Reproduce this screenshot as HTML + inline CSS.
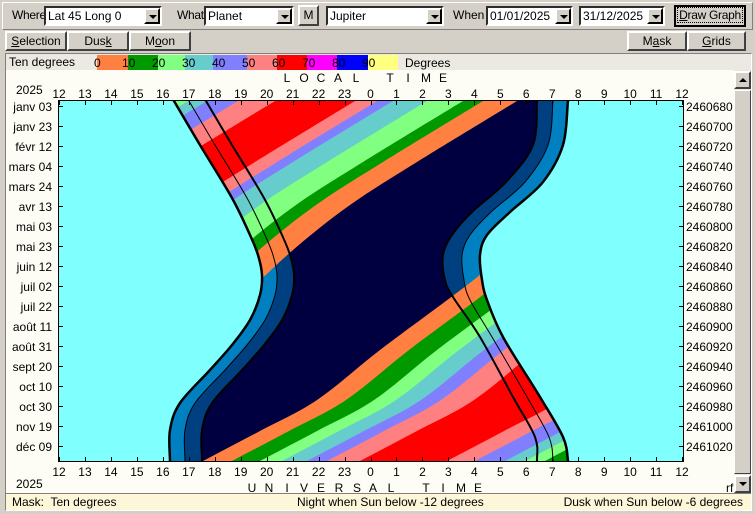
<!DOCTYPE html>
<html><head><meta charset="utf-8"><style>
*{margin:0;padding:0;box-sizing:border-box}
body{width:755px;height:514px;overflow:hidden;background:#d4d0c8;font-family:"Liberation Sans",sans-serif;font-size:11px;color:#000;position:relative}
.a{position:absolute;white-space:nowrap}
.cb{position:absolute;height:20px;background:#fff;border:2px inset #c0c0c0;border-color:#808080 #fff #fff #808080;padding:1px 2px;line-height:14px;font-size:12px}
.cb .ar{position:absolute;right:0;top:0;width:16px;height:16px;background:#d4d0c8;border:2px outset #fff;border-color:#fff #404040 #404040 #fff}
.cb .ar:after{content:"";position:absolute;left:3px;top:5px;border-left:4px solid transparent;border-right:4px solid transparent;border-top:4px solid #000}
.bt{position:absolute;height:20px;background:#d4d0c8;border:2px solid;border-color:#fff #404040 #404040 #fff;text-align:center;line-height:16px;white-space:nowrap;font-size:12px}
.ec{font-family:"Liberation Sans",sans-serif;font-size:12px}
</style></head><body>
<div style="position:absolute;left:2px;top:2px;width:751px;height:28px;border:1px solid #fff;border-right-color:#808080;border-bottom-color:#808080"></div>
<div class="a" style="left:12px;top:8px;font-size:12px;letter-spacing:-0.3px">Where</div>
<div class="cb" style="left:44px;top:6px;width:118px">Lat 45 Long 0<div class="ar"></div></div>
<div class="a" style="left:177px;top:8px;font-size:12px;letter-spacing:-0.3px">What</div>
<div class="cb" style="left:204px;top:6px;width:90px">Planet<div class="ar"></div></div>
<div class="bt" style="left:298px;top:5px;width:21px;height:21px;line-height:17px">M</div>
<div class="cb" style="left:326px;top:6px;width:118px">Jupiter<div class="ar"></div></div>
<div class="a" style="left:453px;top:8px;font-size:12px">When</div>
<div class="cb" style="left:486px;top:6px;width:87px">01/01/2025<div class="ar"></div></div>
<div class="cb" style="left:579px;top:6px;width:86px">31/12/2025<div class="ar"></div></div>
<div class="bt" style="left:674px;top:5px;width:72px;height:22px;border-color:#000;line-height:16px;letter-spacing:-0.3px"><span style="border:1px dotted #000;padding:0 1px"><u>D</u>raw Graph</span></div>
<div class="bt" style="left:5px;top:31px;width:62px"><u>S</u>election</div>
<div class="bt" style="left:67px;top:31px;width:62px">Dus<u>k</u></div>
<div class="bt" style="left:129px;top:31px;width:62px">M<u>o</u>on</div>
<div class="bt" style="left:627px;top:31px;width:60px">M<u>a</u>sk</div>
<div class="bt" style="left:687px;top:31px;width:59px"><u>G</u>rids</div>
<div style="position:absolute;left:5px;top:53px;width:747px;height:458px;border:1px solid #808080;border-right-color:#fff;border-bottom-color:#fff;background:#fefdf5"></div>
<div style="position:absolute;left:6px;top:54px;width:745px;height:16px;background:#ebe9e1"></div>
<div class="a" style="left:9px;top:55px;font-size:12px">Ten degrees</div>
<svg class="a" style="left:0;top:0" width="755" height="514" id="sv">
<g>
<rect x="97" y="55" width="31" height="15" fill="#ff8040"/>
<rect x="128" y="55" width="30" height="15" fill="#009900"/>
<rect x="158" y="55" width="27" height="15" fill="#80ff80"/>
<rect x="185" y="55" width="28" height="15" fill="#66cccc"/>
<rect x="213" y="55" width="34" height="15" fill="#8080ff"/>
<rect x="247" y="55" width="30" height="15" fill="#ff8080"/>
<rect x="277" y="55" width="30" height="15" fill="#ff0000"/>
<rect x="307" y="55" width="30" height="15" fill="#ff00ff"/>
<rect x="337" y="55" width="31" height="15" fill="#0000ff"/>
<rect x="368" y="55" width="30" height="15" fill="#ffff80"/>
<g class="ec" font-size="12">
<text x="94" y="67">0</text><text x="122" y="67">10</text><text x="152" y="67">20</text><text x="182" y="67">30</text><text x="212" y="67">40</text><text x="242" y="67">50</text><text x="272" y="67">60</text><text x="302" y="67">70</text><text x="332" y="67">80</text><text x="362" y="67">90</text>
<text x="405" y="67">Degrees</text>
</g>
</g>
<defs>
<clipPath id="plot"><rect x="59" y="101" width="624" height="360"/></clipPath>
<clipPath id="env"><path id="envp"/></clipPath>
<clipPath id="up"><rect x="0" y="80" width="755" height="290"/></clipPath>
<clipPath id="lo"><rect x="0" y="272" width="755" height="220"/></clipPath>
</defs>
<rect x="59" y="101" width="624" height="360" fill="#80ffff"/>
<g clip-path="url(#plot)">
<g clip-path="url(#env)">
<rect x="0" y="90" width="755" height="400" fill="#0080c0"/>
<path id="e2" fill="#004080"/>
<path id="e3" fill="#000040"/>
<g clip-path="url(#up)" id="ub"></g>
<g clip-path="url(#lo)" id="lb"></g>
</g>
<g fill="none" stroke="#000" stroke-linejoin="round" id="lines"></g>
</g>
<rect x="58.5" y="100.5" width="625" height="361" fill="none" stroke="#000" stroke-width="1"/>
<g stroke="#000" stroke-width="1">
<path d="M59,106.5h4M59,126.5h4M59,146.5h4M59,166.5h4M59,186.5h4M59,206.5h4M59,226.5h4M59,246.5h4M59,266.5h4M59,286.5h4M59,306.5h4M59,326.5h4M59,346.5h4M59,366.5h4M59,386.5h4M59,406.5h4M59,426.5h4M59,446.5h4"/>
<path d="M679,106.5h4M679,126.5h4M679,146.5h4M679,166.5h4M679,186.5h4M679,206.5h4M679,226.5h4M679,246.5h4M679,266.5h4M679,286.5h4M679,306.5h4M679,326.5h4M679,346.5h4M679,366.5h4M679,386.5h4M679,406.5h4M679,426.5h4M679,446.5h4"/>
</g>
<g id="tk" stroke="#000"></g>
<g class="ec" font-size="12" text-anchor="middle">
<g id="htop"></g><g id="hbot"></g>
</g>
<g class="ec" font-size="12" text-anchor="end">
<text x="52" y="111">janv 03</text><text x="52" y="131">janv 23</text><text x="52" y="151">févr 12</text><text x="52" y="171">mars 04</text><text x="52" y="191">mars 24</text><text x="52" y="211">avr 13</text><text x="52" y="231">mai 03</text><text x="52" y="251">mai 23</text><text x="52" y="271">juin 12</text><text x="52" y="291">juil 02</text><text x="52" y="311">juil 22</text><text x="52" y="331">août 11</text><text x="52" y="351">août 31</text><text x="52" y="371">sept 20</text><text x="52" y="391">oct 10</text><text x="52" y="411">oct 30</text><text x="52" y="431">nov 19</text><text x="52" y="451">déc 09</text>
</g>
<g class="ec" font-size="12">
<text x="686" y="111">2460680</text><text x="686" y="131">2460700</text><text x="686" y="151">2460720</text><text x="686" y="171">2460740</text><text x="686" y="191">2460760</text><text x="686" y="211">2460780</text><text x="686" y="231">2460800</text><text x="686" y="251">2460820</text><text x="686" y="271">2460840</text><text x="686" y="291">2460860</text><text x="686" y="311">2460880</text><text x="686" y="331">2460900</text><text x="686" y="351">2460920</text><text x="686" y="371">2460940</text><text x="686" y="391">2460960</text><text x="686" y="411">2460980</text><text x="686" y="431">2461000</text><text x="686" y="451">2461020</text>
<text x="16" y="94">2025</text><text x="16" y="488">2025</text>
<text x="726" y="492">rf</text>
</g>
<g class="ec" font-size="12" text-anchor="middle">
<text x="287" y="82">L</text><text x="304" y="82">O</text><text x="321" y="82">C</text><text x="338" y="82">A</text><text x="356" y="82">L</text><text x="390" y="82">T</text><text x="408" y="82">I</text><text x="426" y="82">M</text><text x="443" y="82">E</text>
<text x="252" y="492">U</text><text x="269" y="492">N</text><text x="287" y="492">I</text><text x="304" y="492">V</text><text x="321" y="492">E</text><text x="339" y="492">R</text><text x="357" y="492">S</text><text x="373" y="492">A</text><text x="391" y="492">L</text><text x="426" y="492">T</text><text x="443" y="492">I</text><text x="461" y="492">M</text><text x="478" y="492">E</text>
</g>
</svg>
<div style="position:absolute;left:734px;top:70px;width:17px;height:424px;background:#e8e6de"></div>
<div style="position:absolute;left:734px;top:90px;width:17px;height:384px;border:1px solid;border-color:#fff #404040 #404040 #fff;background:#d4d0c8"></div>
<div class="bt" style="left:734px;top:71px;width:17px;height:18px"><div style="position:absolute;left:3px;top:5px;border-left:4px solid transparent;border-right:4px solid transparent;border-bottom:4px solid #000"></div></div>
<div class="bt" style="left:734px;top:475px;width:17px;height:18px"><div style="position:absolute;left:3px;top:5px;border-left:4px solid transparent;border-right:4px solid transparent;border-top:4px solid #000"></div></div>
<div style="position:absolute;left:6px;top:493px;width:745px;height:17px;background:#fdf6d8;border-top:1px solid #808080"></div>
<div class="a" style="left:12px;top:495px;font-size:12px">Mask:&nbsp; Ten degrees</div>
<div class="a" style="left:297px;top:495px;font-size:12px">Night when Sun below -12 degrees</div>
<div class="a" style="right:12px;top:495px;font-size:12px">Dusk when Sun below -6 degrees</div>
<script>
var NS='http://www.w3.org/2000/svg';
function cr(p){var d='';for(var i=0;i<p.length-1;i++){var p0=p[i-1]||p[i],p1=p[i],p2=p[i+1],p3=p[i+2]||p2;
var c1=[p1[0]+(p2[0]-p0[0])/6,p1[1]+(p2[1]-p0[1])/6],c2=[p2[0]-(p3[0]-p1[0])/6,p2[1]-(p3[1]-p1[1])/6];
d+=' C'+c1[0].toFixed(1)+','+c1[1].toFixed(1)+' '+c2[0].toFixed(1)+','+c2[1].toFixed(1)+' '+p2[0]+','+p2[1];}return d;}
function sh(p,dx){return p.map(function(q){return [q[0]+dx,q[1]];});}
var L1=[[168,90],[174,101],[200,145],[232,198],[250,235],[258,255],[262,275],[260,295],[250,320],[232,345],[210,370],[180,403],[170,430],[170,461],[170,475]];
var R1=[[570,90],[568,101],[563,145],[543,182],[510,212],[487,235],[480,255],[482,280],[487,300],[503,337],[540,397],[563,437],[568,461],[569,475]];
var R3=[[538,90],[537,101],[533,145],[506,182],[472,212],[452,235],[443,255],[445,280],[453,297],[480,337],[513,397],[535,437],[537,461],[537,475]];
var R2=R1.map(function(q,i){return [Math.round((q[0]+R3[i][0])/2),q[1]];});
var L2=sh(L1,15),L3=sh(L1,32);
function env(L,R){var r=R.slice().reverse();return 'M'+L[0][0]+','+L[0][1]+cr(L)+' L'+r[0][0]+','+r[0][1]+cr(r)+'Z';}
document.getElementById('envp').setAttribute('d',env(L1,R1));
document.getElementById('e2').setAttribute('d',env(L2,R2));
document.getElementById('e3').setAttribute('d',env(L3,R3));
var ln='';
[[L1,2.5],[L2,1],[L3,2],[R1,2.5],[R2,1],[R3,2]].forEach(function(a){ln+='<path stroke-width="'+a[1]+'" d="M'+a[0][0][0]+','+a[0][0][1]+cr(a[0])+'"/>';});
document.getElementById('lines').innerHTML=ln;
var UB=[[552,80],[517,101],[417,162],[350,205],[293,250],[240,300],[190,350],[140,400]];
var ub='M'+UB[0][0]+','+UB[0][1]+cr(UB)+' L-900,400 L-900,80Z';
var uo=[[0,'#ff8040'],[-34,'#009900'],[-54,'#80ff80'],[-90,'#66cccc'],[-124,'#8080ff'],[-140,'#ff8080'],[-162,'#ff0000'],[-242,'#ff8080'],[-279,'#8080ff'],[-310,'#66cccc'],[-329,'#80ff80'],[-344,'#009900']];
var s='';uo.forEach(function(o){s+='<path transform="translate('+o[0]+',0)" d="'+ub+'" fill="'+o[1]+'"/>';});
document.getElementById('ub').innerHTML=s;
var LB=[[149,490],[203,461],[260,431],[317,400],[380,350],[450,298],[486,270],[520,240]];
var lb='M'+LB[0][0]+','+LB[0][1]+cr(LB)+' L1500,240 L1500,490Z';
var lo=[[0,'#ff8040'],[29,'#009900'],[57,'#80ff80'],[79,'#66cccc'],[104,'#8080ff'],[124,'#ff8080'],[157,'#ff0000'],[244,'#ff8080'],[272,'#8080ff'],[302,'#66cccc'],[322,'#80ff80'],[342,'#009900']];
s='';lo.forEach(function(o){s+='<path transform="translate('+o[0]+',0)" d="'+lb+'" fill="'+o[1]+'"/>';});
document.getElementById('lb').innerHTML=s;
var hs=[12,13,14,15,16,17,18,19,20,21,22,23,0,1,2,3,4,5,6,7,8,9,10,11,12],t='',b='',k='';
for(var i=0;i<25;i++){var x=59+i*25.96;t+='<text x="'+x+'" y="98">'+hs[i]+'</text>';b+='<text x="'+x+'" y="476">'+hs[i]+'</text>';
k+='<path d="M'+Math.round(x)+'.5,101v4M'+Math.round(x)+'.5,457v4"/>';}
document.getElementById('htop').innerHTML=t;document.getElementById('hbot').innerHTML=b;document.getElementById('tk').innerHTML=k;
</script>
</body></html>
